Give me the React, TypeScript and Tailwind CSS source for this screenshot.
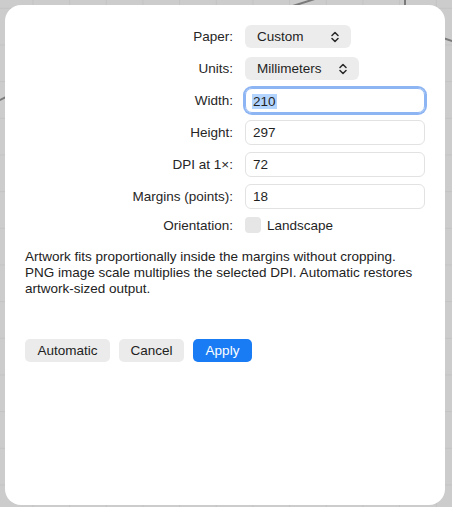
import React from "react";

const font = "font-['Liberation_Sans','Helvetica_Neue',Arial,sans-serif]";

function Chevrons() {
  return (
    <svg width="8" height="12" viewBox="0 0 8 12" fill="none">
      <path d="M1 4.5L4 1.5L7 4.5" stroke="#2a2a2a" strokeWidth="1.5" strokeLinecap="round" strokeLinejoin="round" />
      <path d="M1 7.5L4 10.5L7 7.5" stroke="#2a2a2a" strokeWidth="1.5" strokeLinecap="round" strokeLinejoin="round" />
    </svg>
  );
}

function Row({ label, children, className }: { label: string; children: React.ReactNode; className?: string }) {
  return (
    <div className={"flex items-center " + (className || "")}>
      <div className="w-[208px] shrink-0 pt-[2px] text-right text-[#262626]">{label}</div>
      <div className="ml-3 flex items-center">{children}</div>
    </div>
  );
}

function Select({ value, width }: { value: string; width: string }) {
  return (
    <div className={"flex h-[23px] items-center justify-between rounded-[6px] bg-[#ececec] pl-3 pr-3 text-[#1f1f1f] " + width}>
      <span className="pt-[2px]">{value}</span>
      <Chevrons />
    </div>
  );
}

function Field({ value, focused }: { value: string; focused?: boolean }) {
  if (focused) {
    return (
      <div className="flex h-[25px] w-[180px] items-center rounded-[7px] border border-[#8db5f3] pl-[6px] shadow-[0_0_0_2px_#8db5f3]">
        <span className="mt-[2px] bg-[#b3d5fd] px-px leading-[15px] text-[#1f1f1f]">{value}</span>
      </div>
    );
  }
  return (
    <div className="flex h-[25px] w-[180px] items-center rounded-[6px] border border-[#e2e2e2] pl-[7px] pt-[2px] text-[#1f1f1f]">
      {value}
    </div>
  );
}

export default function App() {
  const step = 36.67;
  const xs = Array.from({ length: 14 }, (_, i) => -3.7 + i * step);
  const ys = Array.from({ length: 15 }, (_, i) => 8.3 + i * step);

  return (
    <div className={"relative h-[507px] w-[452px] overflow-hidden bg-[#cccccc] text-[13.5px] " + font}>
      <svg className="absolute inset-0" width="452" height="507">
        {xs.map((x) => (
          <line key={"x" + x} x1={x} y1={0} x2={x} y2={507} stroke="#c3c3c3" strokeWidth="1" />
        ))}
        {ys.map((y) => (
          <line key={"y" + y} x1={0} y1={y} x2={452} y2={y} stroke="#c3c3c3" strokeWidth="1" />
        ))}
        <line x1="280" y1="10" x2="318" y2="-2" stroke="#7a7a7a" strokeWidth="2" />
        <line x1="405" y1="0" x2="405" y2="10" stroke="#7a7a7a" strokeWidth="2" />
        <line x1="440" y1="37" x2="455" y2="42" stroke="#7a7a7a" strokeWidth="2" />
        <line x1="-2" y1="101" x2="10" y2="95" stroke="#7a7a7a" strokeWidth="2" />
      </svg>

      <div className="relative ml-[5px] mt-[5px] h-[500px] w-[440px] rounded-[16px] bg-white px-5 pt-5">
        <Row label="Paper:">
          <Select value="Custom" width="w-[106px]" />
        </Row>
        <Row label="Units:" className="mt-[9px]">
          <Select value="Millimeters" width="w-[114px]" />
        </Row>
        <Row label="Width:" className="mt-[8px]">
          <Field value="210" focused />
        </Row>
        <Row label="Height:" className="mt-[7px]">
          <Field value="297" />
        </Row>
        <Row label="DPI at 1×:" className="mt-[7px]">
          <Field value="72" />
        </Row>
        <Row label="Margins (points):" className="mt-[7px]">
          <Field value="18" />
        </Row>
        <Row label="Orientation:" className="mt-[7px] h-[18px]">
          <div className="h-4 w-4 rounded-[4px] bg-[#e6e6e6]" />
          <span className="ml-[6px] pt-[2px] text-[#1f1f1f]">Landscape</span>
        </Row>

        <p className="mt-[15px] whitespace-nowrap leading-[16px] text-[#222]">
          Artwork fits proportionally inside the margins without cropping.
          <br />
          PNG image scale multiplies the selected DPI. Automatic restores
          <br />
          artwork-sized output.
        </p>

        <div className="mt-[42px] flex gap-[9px]">
          <button className="h-[23px] w-[85px] rounded-[5px] bg-[#ebebeb] pt-px text-[#222]">Automatic</button>
          <button className="h-[23px] w-[65px] rounded-[5px] bg-[#ebebeb] pt-px text-[#222]">Cancel</button>
          <button className="h-[23px] w-[59px] rounded-[5px] bg-[#1a7cf4] pt-px text-white">Apply</button>
        </div>
      </div>
    </div>
  );
}
